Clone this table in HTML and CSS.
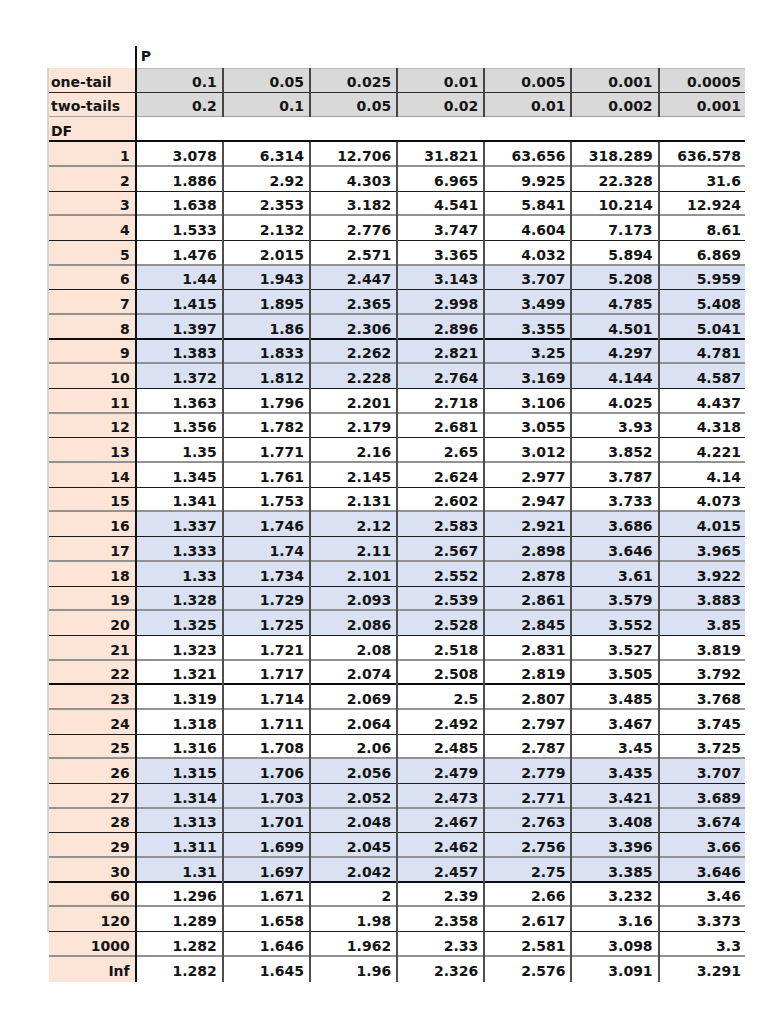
FILE: index.html
```html
<!DOCTYPE html>
<html>
<head>
<meta charset="utf-8">
<link rel="stylesheet" href="styles.css">
<title>t-table</title>
</head>
<body>
<div class="sheet">
  <div class="row prow"><div class="lab blank"></div><div class="merged">P</div></div>
  <div class="row hrow top"><div class="lab left">one-tail</div><div class="c">0.1</div><div class="c">0.05</div><div class="c">0.025</div><div class="c">0.01</div><div class="c">0.005</div><div class="c">0.001</div><div class="c">0.0005</div></div>
  <div class="row hrow bot"><div class="lab left">two-tails</div><div class="c">0.2</div><div class="c">0.1</div><div class="c">0.05</div><div class="c">0.02</div><div class="c">0.01</div><div class="c">0.002</div><div class="c">0.001</div></div>
  <div class="row dfrow k"><div class="lab left">DF</div><div class="merged"></div></div>

  <div class="row g"><div class="lab">1</div><div class="c">3.078</div><div class="c">6.314</div><div class="c">12.706</div><div class="c">31.821</div><div class="c">63.656</div><div class="c">318.289</div><div class="c">636.578</div></div>
  <div class="row d"><div class="lab">2</div><div class="c">1.886</div><div class="c">2.92</div><div class="c">4.303</div><div class="c">6.965</div><div class="c">9.925</div><div class="c">22.328</div><div class="c">31.6</div></div>
  <div class="row g"><div class="lab">3</div><div class="c">1.638</div><div class="c">2.353</div><div class="c">3.182</div><div class="c">4.541</div><div class="c">5.841</div><div class="c">10.214</div><div class="c">12.924</div></div>
  <div class="row d"><div class="lab">4</div><div class="c">1.533</div><div class="c">2.132</div><div class="c">2.776</div><div class="c">3.747</div><div class="c">4.604</div><div class="c">7.173</div><div class="c">8.61</div></div>
  <div class="row g"><div class="lab">5</div><div class="c">1.476</div><div class="c">2.015</div><div class="c">2.571</div><div class="c">3.365</div><div class="c">4.032</div><div class="c">5.894</div><div class="c">6.869</div></div>
  <div class="row d blue"><div class="lab">6</div><div class="c">1.44</div><div class="c">1.943</div><div class="c">2.447</div><div class="c">3.143</div><div class="c">3.707</div><div class="c">5.208</div><div class="c">5.959</div></div>
  <div class="row g blue"><div class="lab">7</div><div class="c">1.415</div><div class="c">1.895</div><div class="c">2.365</div><div class="c">2.998</div><div class="c">3.499</div><div class="c">4.785</div><div class="c">5.408</div></div>
  <div class="row k blue"><div class="lab">8</div><div class="c">1.397</div><div class="c">1.86</div><div class="c">2.306</div><div class="c">2.896</div><div class="c">3.355</div><div class="c">4.501</div><div class="c">5.041</div></div>
  <div class="row g blue"><div class="lab">9</div><div class="c">1.383</div><div class="c">1.833</div><div class="c">2.262</div><div class="c">2.821</div><div class="c">3.25</div><div class="c">4.297</div><div class="c">4.781</div></div>
  <div class="row d blue"><div class="lab">10</div><div class="c">1.372</div><div class="c">1.812</div><div class="c">2.228</div><div class="c">2.764</div><div class="c">3.169</div><div class="c">4.144</div><div class="c">4.587</div></div>
  <div class="row g"><div class="lab">11</div><div class="c">1.363</div><div class="c">1.796</div><div class="c">2.201</div><div class="c">2.718</div><div class="c">3.106</div><div class="c">4.025</div><div class="c">4.437</div></div>
  <div class="row d"><div class="lab">12</div><div class="c">1.356</div><div class="c">1.782</div><div class="c">2.179</div><div class="c">2.681</div><div class="c">3.055</div><div class="c">3.93</div><div class="c">4.318</div></div>
  <div class="row g"><div class="lab">13</div><div class="c">1.35</div><div class="c">1.771</div><div class="c">2.16</div><div class="c">2.65</div><div class="c">3.012</div><div class="c">3.852</div><div class="c">4.221</div></div>
  <div class="row d"><div class="lab">14</div><div class="c">1.345</div><div class="c">1.761</div><div class="c">2.145</div><div class="c">2.624</div><div class="c">2.977</div><div class="c">3.787</div><div class="c">4.14</div></div>
  <div class="row g"><div class="lab">15</div><div class="c">1.341</div><div class="c">1.753</div><div class="c">2.131</div><div class="c">2.602</div><div class="c">2.947</div><div class="c">3.733</div><div class="c">4.073</div></div>
  <div class="row d blue"><div class="lab">16</div><div class="c">1.337</div><div class="c">1.746</div><div class="c">2.12</div><div class="c">2.583</div><div class="c">2.921</div><div class="c">3.686</div><div class="c">4.015</div></div>
  <div class="row g blue"><div class="lab">17</div><div class="c">1.333</div><div class="c">1.74</div><div class="c">2.11</div><div class="c">2.567</div><div class="c">2.898</div><div class="c">3.646</div><div class="c">3.965</div></div>
  <div class="row d blue"><div class="lab">18</div><div class="c">1.33</div><div class="c">1.734</div><div class="c">2.101</div><div class="c">2.552</div><div class="c">2.878</div><div class="c">3.61</div><div class="c">3.922</div></div>
  <div class="row g blue"><div class="lab">19</div><div class="c">1.328</div><div class="c">1.729</div><div class="c">2.093</div><div class="c">2.539</div><div class="c">2.861</div><div class="c">3.579</div><div class="c">3.883</div></div>
  <div class="row d blue"><div class="lab">20</div><div class="c">1.325</div><div class="c">1.725</div><div class="c">2.086</div><div class="c">2.528</div><div class="c">2.845</div><div class="c">3.552</div><div class="c">3.85</div></div>
  <div class="row g"><div class="lab">21</div><div class="c">1.323</div><div class="c">1.721</div><div class="c">2.08</div><div class="c">2.518</div><div class="c">2.831</div><div class="c">3.527</div><div class="c">3.819</div></div>
  <div class="row k"><div class="lab">22</div><div class="c">1.321</div><div class="c">1.717</div><div class="c">2.074</div><div class="c">2.508</div><div class="c">2.819</div><div class="c">3.505</div><div class="c">3.792</div></div>
  <div class="row g"><div class="lab">23</div><div class="c">1.319</div><div class="c">1.714</div><div class="c">2.069</div><div class="c">2.5</div><div class="c">2.807</div><div class="c">3.485</div><div class="c">3.768</div></div>
  <div class="row d"><div class="lab">24</div><div class="c">1.318</div><div class="c">1.711</div><div class="c">2.064</div><div class="c">2.492</div><div class="c">2.797</div><div class="c">3.467</div><div class="c">3.745</div></div>
  <div class="row g"><div class="lab">25</div><div class="c">1.316</div><div class="c">1.708</div><div class="c">2.06</div><div class="c">2.485</div><div class="c">2.787</div><div class="c">3.45</div><div class="c">3.725</div></div>
  <div class="row d blue"><div class="lab">26</div><div class="c">1.315</div><div class="c">1.706</div><div class="c">2.056</div><div class="c">2.479</div><div class="c">2.779</div><div class="c">3.435</div><div class="c">3.707</div></div>
  <div class="row g blue"><div class="lab">27</div><div class="c">1.314</div><div class="c">1.703</div><div class="c">2.052</div><div class="c">2.473</div><div class="c">2.771</div><div class="c">3.421</div><div class="c">3.689</div></div>
  <div class="row d blue"><div class="lab">28</div><div class="c">1.313</div><div class="c">1.701</div><div class="c">2.048</div><div class="c">2.467</div><div class="c">2.763</div><div class="c">3.408</div><div class="c">3.674</div></div>
  <div class="row g blue"><div class="lab">29</div><div class="c">1.311</div><div class="c">1.699</div><div class="c">2.045</div><div class="c">2.462</div><div class="c">2.756</div><div class="c">3.396</div><div class="c">3.66</div></div>
  <div class="row k blue"><div class="lab">30</div><div class="c">1.31</div><div class="c">1.697</div><div class="c">2.042</div><div class="c">2.457</div><div class="c">2.75</div><div class="c">3.385</div><div class="c">3.646</div></div>
  <div class="row g"><div class="lab">60</div><div class="c">1.296</div><div class="c">1.671</div><div class="c">2</div><div class="c">2.39</div><div class="c">2.66</div><div class="c">3.232</div><div class="c">3.46</div></div>
  <div class="row d"><div class="lab">120</div><div class="c">1.289</div><div class="c">1.658</div><div class="c">1.98</div><div class="c">2.358</div><div class="c">2.617</div><div class="c">3.16</div><div class="c">3.373</div></div>
  <div class="row g nostrip"><div class="lab">1000</div><div class="c">1.282</div><div class="c">1.646</div><div class="c">1.962</div><div class="c">2.33</div><div class="c">2.581</div><div class="c">3.098</div><div class="c">3.3</div></div>
  <div class="row nostrip"><div class="lab">Inf</div><div class="c">1.282</div><div class="c">1.645</div><div class="c">1.96</div><div class="c">2.326</div><div class="c">2.576</div><div class="c">3.091</div><div class="c">3.291</div></div>
</div>
</body>
</html>
```

FILE: styles.css
```css
* {
  box-sizing: border-box;
}

body {
  margin: 0;
  background: #ffffff;
  color: #141414;
  font-family: "DejaVu Sans", Verdana, sans-serif;
  font-weight: bold;
  font-size: 14px;
}

.sheet {
  padding: 46px 0 0 47px;
}

.row {
  display: grid;
  grid-template-columns: 89.7px repeat(6, 87.17px) 85.3px;
  height: 24.7px;
  --lw: 0px;
  --lc: transparent;
}

.row > div {
  display: flex;
  align-items: flex-end;
  justify-content: flex-end;
  line-height: 16px;
  padding: 0 5px 3px 0;
  white-space: nowrap;
  box-shadow: inset 0 calc(-1 * var(--lw)) 0 var(--lc);
}

/* row bottom lines */
.row.g { --lw: 2px; --lc: #929292; }
.row.d { --lw: 1px; --lc: #1c1c1c; }
.row.k { --lw: 2px; --lc: #0c0c0c; }

/* label column */
.lab {
  background: #fce4d6;
  border-left: 2px solid #d3d3d3;
  border-right: 2px solid #111111;
}

.nostrip .lab {
  border-left-color: #ffffff;
}

.lab.left {
  justify-content: flex-start;
  padding-left: 2px;
}

.lab.blank {
  background: #ffffff;
  border-left-color: #ffffff;
}

/* data cells */
.c {
  border-right: 2px solid #4e4e4e;
}

.c:last-child {
  border-right: 0;
  padding-right: 4px;
}

.blue .c {
  background: #d9e1f2;
}

/* header rows */
.prow {
  height: 22.1px;
}

.prow > div {
  padding-bottom: 4px;
}

.merged {
  grid-column: span 7;
  justify-content: flex-start !important;
  padding-left: 4px !important;
}

.hrow .c {
  background: #d9d9d9;
  border-right-color: #454545;
}

.hrow.top {
  --lw: 1px;
  --lc: #2a2a2a;
}

.hrow.top .c {
  box-shadow: inset 0 1px 0 #b8b8b8, inset 0 -1px 0 #2a2a2a;
}

.hrow.bot {
  --lw: 1px;
  --lc: #a0a0a0;
}
```
